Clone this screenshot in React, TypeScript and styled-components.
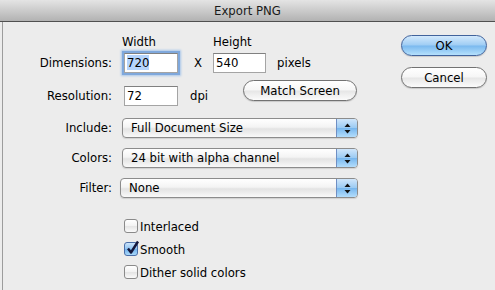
import styled, { createGlobalStyle } from "styled-components";

const Global = createGlobalStyle`
  html, body { margin: 0; padding: 0; background: #ececec; }
  body {
    font-family: "DejaVu Sans Condensed", "DejaVu Sans", sans-serif;
    font-size: 13px;
    color: #000;
  }
`;

const Window = styled.div`
  width: 495px;
  height: 290px;
  overflow: hidden;
  display: flex;
  flex-direction: column;
  background: #ececec;
`;

const TitleBar = styled.div`
  flex: none;
  height: 21px;
  border-bottom: 1px solid #505050;
  background: linear-gradient(#e4e4e4, #b2b2b2);
  display: flex;
  align-items: center;
  justify-content: center;
  color: #1a1a1a;
`;

const Body = styled.div`
  flex: 1;
  display: flex;
  margin-left: 2px;
  border-left: 1px solid #9c9c9c;
`;

const Form = styled.div`
  width: 355px;
  padding-top: 13px;
  display: flex;
  flex-direction: column;
`;

const Row = styled.div<{ $top: number; $align?: string; $h?: number }>`
  display: flex;
  align-items: ${(p) => p.$align || "center"};
  margin-top: ${(p) => p.$top}px;
  ${(p) => p.$h && `height: ${p.$h}px;`}
`;

const Label = styled.span`
  width: 109px;
  flex: none;
  text-align: right;
  line-height: 20px;
`;

const ColHead = styled.span<{ $w: number }>`
  width: ${(p) => p.$w}px;
  line-height: 14px;
`;

const TextField = styled.div<{ $w: number; $focus?: boolean }>`
  box-sizing: border-box;
  width: ${(p) => p.$w}px;
  height: 20px;
  background: #fff;
  border: 1px solid #a4a4a4;
  border-top-color: #808080;
  padding-left: 2px;
  line-height: 18px;
  flex: none;
  ${(p) => p.$focus && "box-shadow: 0 0 0 2px #7fa8dc, 0 0 2px 3px #a9c6ea;"}
`;

const Selection = styled.span`
  background: #b5d4fc;
`;

const Unit = styled.span<{ $left: number }>`
  margin-left: ${(p) => p.$left}px;
  line-height: 20px;
`;

const PillButton = styled.div<{ $w: number; $primary?: boolean }>`
  box-sizing: border-box;
  width: ${(p) => p.$w}px;
  height: 21px;
  border-radius: 11px;
  border: 1px solid ${(p) => (p.$primary ? "#41639c" : "#727272")};
  background: ${(p) =>
    p.$primary
      ? "linear-gradient(#d3e9fc, #9fcdf4 48%, #7ab9ef 52%, #b5e0fc)"
      : "linear-gradient(#ffffff, #f6f6f6 48%, #e6e6e6 52%, #fbfbfb)"};
  box-shadow: 0 1px 1px rgba(0, 0, 0, 0.15);
  display: flex;
  align-items: center;
  justify-content: center;
  line-height: 1;
  flex: none;
`;

const MatchButton = styled(PillButton)`
  margin-left: auto;
  margin-right: 1px;
  align-self: flex-start;
`;

const Select = styled.div<{ $left: number }>`
  box-sizing: border-box;
  height: 20px;
  margin-left: ${(p) => p.$left}px;
  flex: 1;
  display: flex;
  border: 1px solid #8c8c8c;
  border-radius: 4px;
  background: linear-gradient(#ffffff, #f4f4f4 45%, #e3e3e3 55%, #f9f9f9);
  box-shadow: 0 1px 1px rgba(0, 0, 0, 0.12);
  overflow: hidden;
`;

const SelectText = styled.span`
  flex: 1;
  padding-left: 8px;
  line-height: 18px;
`;

const Stepper = styled.div`
  width: 20px;
  flex: none;
  border-left: 1px solid #6f8fc4;
  background: linear-gradient(#d0e6fb, #9ccbf3 48%, #78b7ee 52%, #b3ddfb);
  display: flex;
  align-items: center;
  justify-content: center;
`;

const Checks = styled.div`
  margin: 21px 0 0 121px;
  display: flex;
  flex-direction: column;
  gap: 9px;
`;

const CheckRow = styled.div`
  display: flex;
  align-items: center;
  gap: 2px;
  height: 14px;
`;

const Box = styled.div<{ $on?: boolean }>`
  box-sizing: border-box;
  width: 14px;
  height: 14px;
  border-radius: 3px;
  border: 1px solid ${(p) => (p.$on ? "#4a6ea8" : "#8a8a8a")};
  background: ${(p) =>
    p.$on
      ? "linear-gradient(#cbe4fb, #8fc3f1 50%, #6fb0ec 51%, #a9d8fa)"
      : "linear-gradient(#ffffff, #f2f2f2 50%, #e4e4e4 51%, #fafafa)"};
  position: relative;
  flex: none;
`;

const Tick = styled.svg`
  position: absolute;
  left: 1px;
  top: -3px;
`;

const Side = styled.div`
  margin-left: 43px;
  padding-top: 13px;
  display: flex;
  flex-direction: column;
  gap: 11px;
`;

function Arrows() {
  return (
    <svg width="7" height="11" viewBox="0 0 7 11">
      <path d="M3.5 0.5 L6.5 4 L0.5 4 Z" fill="#111" />
      <path d="M3.5 10.5 L6.5 7 L0.5 7 Z" fill="#111" />
    </svg>
  );
}

function Popup({ text, left = 0 }: { text: string; left?: number }) {
  return (
    <Select $left={left}>
      <SelectText>{text}</SelectText>
      <Stepper><Arrows /></Stepper>
    </Select>
  );
}

function Check({ label, on }: { label: string; on?: boolean }) {
  return (
    <CheckRow>
      <Box $on={on}>
        {on && (
          <Tick width="14" height="15" viewBox="0 0 14 15">
            <path d="M2 8.5 L5 12.5 L12 1.5" fill="none" stroke="#14163a" strokeWidth="2.4" strokeLinejoin="round" />
          </Tick>
        )}
      </Box>
      <span>{label}</span>
    </CheckRow>
  );
}

export default function App() {
  return (
    <Window>
      <Global />
      <TitleBar>Export PNG</TitleBar>
      <Body>
        <Form>
          <Row $top={0}>
            <ColHead $w={119} />
            <ColHead $w={91}>Width</ColHead>
            <ColHead $w={60}>Height</ColHead>
          </Row>
          <Row $top={4}>
            <Label>Dimensions:</Label>
            <TextField $w={54} $focus style={{ marginLeft: 12 }}>
              <Selection>720</Selection>
            </TextField>
            <Unit $left={16}>X</Unit>
            <TextField $w={53} style={{ marginLeft: 11 }}>540</TextField>
            <Unit $left={11}>pixels</Unit>
          </Row>
          <Row $top={7} $align="flex-end" $h={26}>
            <Label>Resolution:</Label>
            <TextField $w={54} style={{ marginLeft: 12 }}>72</TextField>
            <Unit $left={12}>dpi</Unit>
            <MatchButton $w={114}>Match Screen</MatchButton>
          </Row>
          <Row $top={12}>
            <Label>Include:</Label>
            <Popup text="Full Document Size" left={10} />
          </Row>
          <Row $top={10}>
            <Label>Colors:</Label>
            <Popup text="24 bit with alpha channel" left={10} />
          </Row>
          <Row $top={10}>
            <Label>Filter:</Label>
            <Popup text="None" left={8} />
          </Row>
          <Checks>
            <Check label="Interlaced" />
            <Check label="Smooth" on />
            <Check label="Dither solid colors" />
          </Checks>
        </Form>
        <Side>
          <PillButton $w={86} $primary>OK</PillButton>
          <PillButton $w={86}>Cancel</PillButton>
        </Side>
      </Body>
    </Window>
  );
}
